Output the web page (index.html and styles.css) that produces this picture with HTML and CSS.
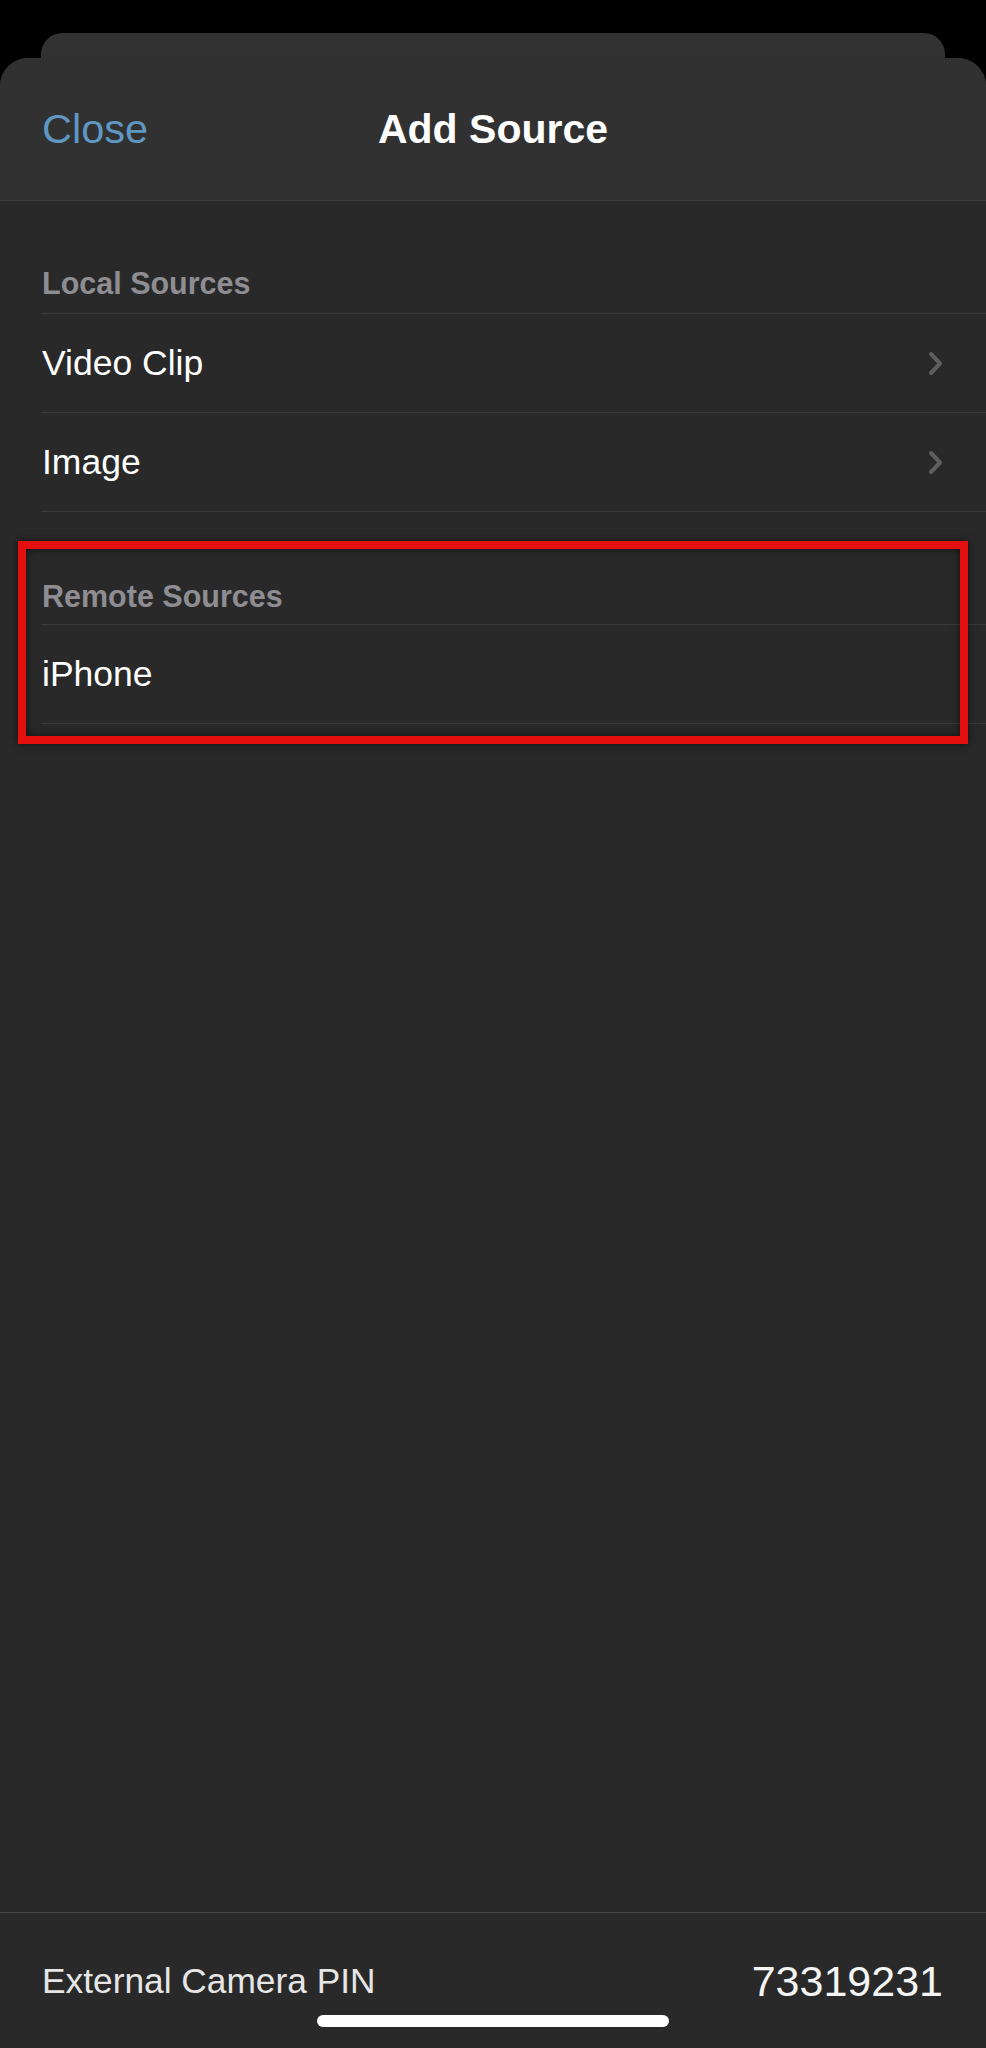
FILE: index.html
```html
<!DOCTYPE html>
<html lang="en">
<head>
  <meta charset="UTF-8">
  <title>Add Source</title>
  <link rel="stylesheet" href="styles.css">
</head>
<body>

<div class="screen">
  <div class="back-card"></div>

  <div class="sheet">
    <div class="nav-bar">
      <a class="nav-close">Close</a>
      <h1 class="nav-title">Add Source</h1>
      <span></span>
    </div>

    <div class="sheet-content">
      <div class="group">
        <div class="group-header">Local Sources</div>
        <div class="row">
          <span class="row-label">Video Clip</span>
          <svg class="chevron" width="15" height="25" viewBox="0 0 15 25"><path d="M3 3 L12 12.5 L3 22"/></svg>
        </div>
        <div class="row">
          <span class="row-label">Image</span>
          <svg class="chevron" width="15" height="25" viewBox="0 0 15 25"><path d="M3 3 L12 12.5 L3 22"/></svg>
        </div>
      </div>

      <div class="group group-remote">
        <div class="group-header">Remote Sources</div>
        <div class="row">
          <span class="row-label">iPhone</span>
        </div>
        <div class="highlight"></div>
      </div>
    </div>

    <div class="sheet-footer">
      <div class="pin-row">
        <span class="pin-label">External Camera PIN</span>
        <span class="pin-value">73319231</span>
      </div>
      <div class="home-indicator"></div>
    </div>
  </div>
</div>

</body>
</html>
```

FILE: styles.css
```css
body {
  margin: 0;
  background: #000;
  font-family: "Liberation Sans", Arial, sans-serif;
  color: #fff;
}
.screen {
  height: 2048px;
  display: flex;
  flex-direction: column;
  padding-top: 33px;
  box-sizing: border-box;
}
.back-card {
  height: 25px;
  margin: 0 41px;
  background: #323232;
  border-radius: 21px 21px 0 0;
  flex-shrink: 0;
}
.sheet {
  flex: 1;
  display: flex;
  flex-direction: column;
  background: #292929;
  border-radius: 28px 28px 0 0;
  overflow: hidden;
}
.nav-bar {
  height: 142px;
  display: grid;
  grid-template-columns: 1fr auto 1fr;
  align-items: center;
  padding: 0 42px;
  background: #313131;
  border-bottom: 1px solid #3d3d3d;
}
.nav-close {
  color: #5f97c3;
  font-size: 41.5px;
}
.nav-title {
  margin: 0;
  font-size: 41px;
  font-weight: bold;
}
.sheet-content {
  flex: 1;
}
.group-header,
.row {
  margin-left: 41px;
  border-bottom: 1px solid #3a3a3a;
}
.group-header {
  padding: 64px 0 12px 1px;
  line-height: 36px;
  font-size: 30.5px;
  font-weight: bold;
  color: #8d8d92;
}
.group-remote .group-header {
  padding-top: 66px;
  padding-bottom: 10px;
}
.row {
  height: 98px;
  display: flex;
  align-items: center;
  justify-content: space-between;
  padding: 0 43px 0 1px;
}
.row-label {
  font-size: 35.5px;
}
.chevron path {
  fill: none;
  stroke: #5e5e61;
  stroke-width: 4;
  stroke-linecap: round;
  stroke-linejoin: round;
}
.group-remote {
  position: relative;
}
.highlight {
  position: absolute;
  top: 29px;
  left: 18px;
  right: 18px;
  bottom: -20px;
  border: 8px solid #e3100f;
  box-shadow: 0 0 8px rgba(0,0,0,0.6), inset 0 0 8px rgba(0,0,0,0.6);
}
.sheet-footer {
  border-top: 1px solid #474747;
  padding-top: 43px;
  display: flex;
  flex-direction: column;
  align-items: center;
}
.pin-row {
  align-self: stretch;
  height: 50px;
  display: flex;
  align-items: center;
  justify-content: space-between;
  padding: 0 43px 0 42px;
}
.pin-label {
  font-size: 35.3px;
  color: #e6e6e6;
}
.pin-value {
  font-size: 43px;
  color: #f5f5f5;
}
.home-indicator {
  width: 352px;
  height: 12px;
  margin: 9px 0 21px;
  background: #fff;
  border-radius: 6px;
}
```
